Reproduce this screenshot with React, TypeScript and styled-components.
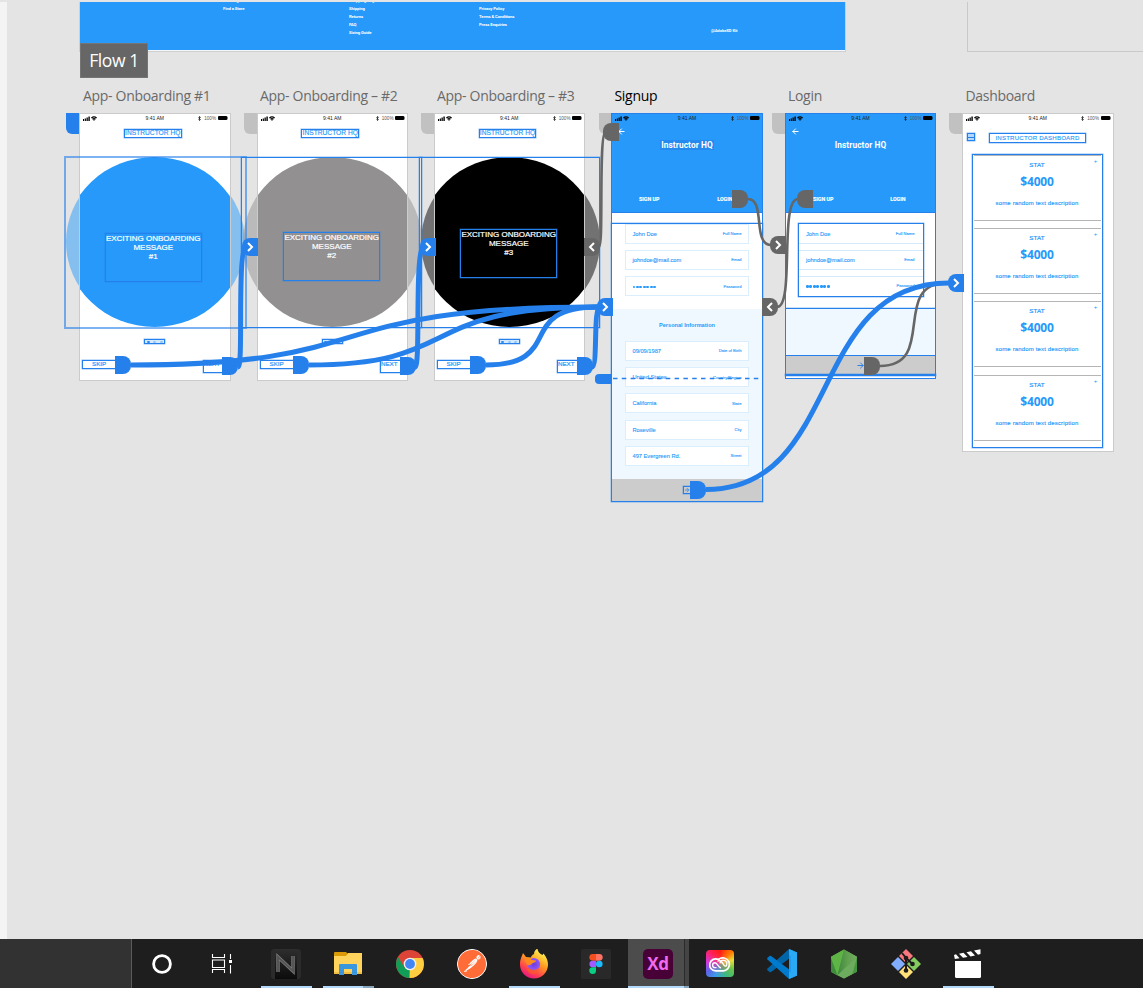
import React from "react";
import styled, { createGlobalStyle } from "styled-components";
import { ArrowLeft, ArrowRight } from "lucide-react";
import { SiPostman } from "react-icons/si";

const BLUE = "#2699fb";
const WIRE = "#2680eb";
const GRAY = "#666666";
const GLOW = "0 0 0 0.5px rgba(38, 128, 235, 0.5)";

const GlobalStyle = createGlobalStyle`
  * { box-sizing: border-box; }
  body { margin: 0; background: #e4e4e4; font-family: "Liberation Sans", Arial, sans-serif; }
`;

const Screen = styled.div`
  width: 1143px;
  height: 988px;
  display: flex;
  flex-direction: column;
  overflow: hidden;
`;

const Canvas = styled.main`
  position: relative;
  flex: 1;
  background: #e4e4e4;
  overflow: hidden;
`;

const SidePanel = styled.div`
  width: 7px;
  height: 937px;
  margin-top: 2px;
  background: #f4f4f4;
`;

type Box = { $x: number; $y: number; $w: number; $h: number };

/* ---------- canvas items ---------- */

const WebFooter = styled.section`
  position: absolute;
  left: 79px;
  top: 2px;
  width: 767px;
  height: 50px;
  padding-left: 143px;
  border: solid #cfcfcf;
  border-width: 0 1px 1px 1px;
  box-shadow: inset 0 -1px #f3f8fd;
  background: ${BLUE};
  display: flex;
  overflow: hidden;
`;

const FooterColumn = styled.div<{ $w: number; $top?: number }>`
  width: ${(p) => p.$w}px;
  flex: none;
  margin-top: ${(p) => p.$top ?? -5}px;
  font: 700 4.2px/8px Roboto, sans-serif;
  letter-spacing: -0.1px;
  color: #fff;
  white-space: nowrap;
`;

const EmptyBoard = styled.section`
  position: absolute;
  left: 967px;
  top: 2px;
  width: 200px;
  height: 50px;
  border: solid #c9c9c9;
  border-width: 0 0 1px 1px;
`;

const FlowTag = styled.div`
  position: absolute;
  left: 80px;
  top: 43px;
  width: 68px;
  height: 35px;
  background: #666;
  box-shadow: inset 0 0 0 1px #757575;
  color: #fff;
  font: 17.5px/35px "Open Sans", sans-serif;
  letter-spacing: -0.4px;
  text-align: center;
  white-space: nowrap;
`;

const BoardLabel = styled.h2<{ $x: number; $active?: boolean }>`
  position: absolute;
  left: ${(p) => p.$x}px;
  top: 86px;
  margin: 0;
  font: 400 14px/20px "Open Sans", sans-serif;
  letter-spacing: -0.31px;
  color: ${(p) => (p.$active ? "#000" : "#6a6a6a")};
  white-space: nowrap;
`;

const HomeTab = styled.div<{ $x: number; $on?: boolean }>`
  position: absolute;
  left: ${(p) => p.$x}px;
  top: 113px;
  width: 13px;
  height: 21px;
  border-radius: 0 0 0 6px;
  background: ${(p) => (p.$on ? WIRE : "#c1c1c1")};
`;

const Artboard = styled.article<{ $x: number; $w?: number; $h: number; $line?: string }>`
  position: absolute;
  left: ${(p) => p.$x}px;
  top: 113px;
  width: ${(p) => p.$w ?? 152}px;
  height: ${(p) => p.$h}px;
  border: 1px solid ${(p) => p.$line ?? "#cbcbcb"};
  background: #fff;
  display: flex;
  flex-direction: column;
  align-items: center;
  overflow: hidden;
`;

const GhostCircle = styled.div<{ $x: number; $color: string }>`
  position: absolute;
  left: ${(p) => p.$x}px;
  top: 157px;
  width: 179px;
  height: 170px;
  border-radius: 50%;
  background: ${(p) => p.$color};
  opacity: 0.5;
`;

const Frame = styled.div<Box & { $soft?: boolean }>`
  position: absolute;
  left: ${(p) => p.$x}px;
  top: ${(p) => p.$y}px;
  width: ${(p) => p.$w}px;
  height: ${(p) => p.$h}px;
  border: ${(p) => (p.$soft ? "2px solid rgba(38,128,235,.6)" : `1px solid ${WIRE}`)};
  box-shadow: ${(p) => (p.$soft ? "none" : GLOW)};
`;

/* ---------- status bar ---------- */

const StatusRow = styled.div`
  align-self: stretch;
  flex: none;
  height: 9px;
  padding: 0 3px;
  display: grid;
  grid-template-columns: 1fr auto 1fr;
  align-items: center;
  font-size: 5px;
  line-height: 9px;
  color: #222;
`;

const Clock = styled.span`
  margin-top: -1px;
`;

const StatusEnd = styled.div`
  display: flex;
  align-items: center;
  justify-content: flex-end;
  gap: 1.5px;
  margin-top: -1px;
`;

const Percent = styled.span`
  margin: 1px 0 0 1.5px;
  font-size: 4.6px;
  color: #555;
`;

const Battery = styled.i`
  width: 9px;
  height: 4px;
  border-radius: 1px;
  background: #000;
  box-shadow: 1px 0 0 -0.5px #000;
`;

const StatusBar = () => (
  <StatusRow>
    <svg width="14" height="5" viewBox="0 0 14 5">
      <path d="M0 3h1v2H0zM1.7 2.4h1.200V5H1.700zM3.500 1.400h1.300V5H3.500zM5.400 .4h1.400V5H5.400z" fill="#000" />
      <path d="M8.400 2Q11 -.3 13.600 2M9.500 3.200Q11 1.900 12.500 3.200" stroke="#000" strokeWidth="1.200" fill="none" />
      <path d="M10 3.600h2L11 5z" fill="#000" />
    </svg>
    <Clock>9:41 AM</Clock>
    <StatusEnd>
      <svg width="3" height="5" viewBox="0 0 3 5">
        <path d="M.4 1.4L2.4 3.4 1.5 4.6V.4L2.4 1.5.4 3.4" stroke="#222" strokeWidth=".8" fill="none" />
      </svg>
      <Percent>100%</Percent>
      <Battery />
    </StatusEnd>
  </StatusRow>
);

/* ---------- onboarding ---------- */

const BrandBox = styled.div<{ $w: number }>`
  flex: none;
  margin: 6px 4px 0 0;
  width: ${(p) => p.$w}px;
  height: 9px;
  border: 1px solid ${WIRE};
  box-shadow: ${GLOW};
  color: ${BLUE};
  font-size: 6.6px;
  line-height: 6.4px;
  letter-spacing: 0.05px;
  text-align: center;
  white-space: nowrap;
  -webkit-text-stroke: 0.15px;
`;

const Hero = styled.div<{ $color: string; $gap: number }>`
  flex: none;
  margin-top: 19px;
  width: 179px;
  height: 170px;
  padding-top: ${(p) => p.$gap}px;
  border-radius: 50%;
  background: ${(p) => p.$color};
  display: flex;
  justify-content: center;
`;

const Message = styled.p<{ $shift: number }>`
  margin: 0 0 0 ${(p) => p.$shift}px;
  width: 97px;
  height: 49px;
  border: 1px solid ${WIRE};
  box-shadow: ${GLOW};
  color: #fff;
  font-size: 8px;
  line-height: 9px;
  text-align: center;
  white-space: nowrap;
  -webkit-text-stroke: 0.2px;
`;

const Pager = styled.div`
  flex: none;
  margin-top: 12px;
  width: 21px;
  height: 5px;
  border: 1px solid ${WIRE};
  box-shadow: ${GLOW};
  display: flex;
  justify-content: space-around;
  align-items: center;
  background: #d5e9fc;
`;

const Dot = styled.i<{ $on?: boolean }>`
  width: 3px;
  height: 2px;
  border-radius: 50%;
  background: ${(p) => (p.$on ? WIRE : "#8ec3f7")};
`;

const Actions = styled.div`
  flex: none;
  align-self: stretch;
  margin-top: 16px;
  padding: 0 1px 0 2px;
  display: flex;
  justify-content: space-between;
  color: ${BLUE};
  font-size: 6.2px;
  line-height: 5px;
  -webkit-text-stroke: 0.2px;
`;

const Skip = styled.span`
  width: 41px;
  height: 9px;
  border: 1px solid ${WIRE};
  box-shadow: ${GLOW};
  padding-left: 9px;
`;

const Next = styled.span`
  width: 26px;
  height: 13px;
  border: 1px solid ${WIRE};
  box-shadow: ${GLOW};
`;

type OnboardingProps = { x: number; n: number; color: string; brandW: number; gap: number; shift: number };

const Onboarding = ({ x, n, color, brandW, gap, shift }: OnboardingProps) => (
  <Artboard $x={x} $w={151.500} $h={268}>
    <StatusBar />
    <BrandBox $w={brandW}>INSTRUCTOR HQ</BrandBox>
    <Hero $color={color} $gap={gap}>
      <Message $shift={shift}>
        EXCITING ONBOARDING
        <br />
        MESSAGE
        <br />#{n}
      </Message>
    </Hero>
    <Pager>
      <Dot $on />
      <Dot />
      <Dot />
    </Pager>
    <Actions>
      <Skip>SKIP</Skip>
      <Next>NEXT</Next>
    </Actions>
  </Artboard>
);

/* ---------- sign up and login ---------- */

const Header = styled.header`
  flex: none;
  align-self: stretch;
  height: 99px;
  background: ${BLUE};
  border-bottom: 1px solid ${WIRE};
  display: flex;
  flex-direction: column;
`;

const BackRow = styled.div`
  height: 16px;
  padding: 4px 0 0 5px;
  color: #fff;
  line-height: 0;
`;

const AppTitle = styled.div<{ $boxed?: boolean }>`
  align-self: center;
  margin-top: 1px;
  height: 10px;
  padding: 0 1px;
  background: ${(p) => (p.$boxed ? "#248af0" : "transparent")};
  color: #fff;
  font: 700 8.3px/10px Roboto, sans-serif;
  letter-spacing: 0.1px;
`;

const TabRow = styled.nav`
  margin-top: 44px;
  padding: 0 29.500px 0 27px;
  display: flex;
  justify-content: space-between;
  color: #fff;
  font: 700 5.3px/10px Roboto, sans-serif;
  -webkit-text-stroke: 0.15px;
`;

const AuthHeader = ({ boxed }: { boxed?: boolean }) => (
  <Header>
    <StatusBar />
    <BackRow>
      <ArrowLeft size={9} strokeWidth={2.6} />
    </BackRow>
    <AppTitle $boxed={boxed}>Instructor HQ</AppTitle>
    <TabRow>
      <span>SIGN UP</span>
      <span>LOGIN</span>
    </TabRow>
  </Header>
);

const Form = styled.div<{ $tint?: boolean; $h: number; $pad: number }>`
  flex: none;
  align-self: stretch;
  height: ${(p) => p.$h}px;
  padding: ${(p) => p.$pad}px 13px 0;
  background: ${(p) => (p.$tint ? "#f0f8ff" : "#fff")};
  display: flex;
  flex-direction: column;
  gap: 6.2px;
  overflow: hidden;
`;

const Field = styled.div`
  flex: none;
  height: 20px;
  padding: 0 6.5px;
  border: 1px solid #dbeefe;
  background: #fff;
  display: flex;
  align-items: center;
  justify-content: space-between;
  color: ${BLUE};
  font-size: 5.7px;
  white-space: nowrap;
  -webkit-text-stroke: 0.12px;
`;

const Hint = styled.small`
  font-size: 4.1px;
`;

const Bullets = styled.span`
  display: flex;
  gap: 0.8px;
  padding-top: 1.5px;

  i {
    width: 2.7px;
    height: 2.7px;
    border-radius: 50%;
    background: ${BLUE};
  }
`;

const Password = () => (
  <Bullets>
    {Array.from({ length: 7 }, (_, i) => (
      <i key={i} />
    ))}
  </Bullets>
);

const SectionTitle = styled.h3`
  margin: 0 0 4.8px;
  color: ${BLUE};
  font: 700 5.6px/9px "Liberation Sans", sans-serif;
  text-align: center;
`;

const Gap = styled.div<{ $h: number }>`
  flex: none;
  height: ${(p) => p.$h}px;
`;

const SubmitBar = styled.div<{ $h: number; $nudge?: number }>`
  flex: none;
  align-self: stretch;
  height: ${(p) => p.$h}px;
  padding-right: ${(p) => p.$nudge ?? 0}px;
  background: #ccc;
  display: flex;
  align-items: center;
  justify-content: center;
  color: ${WIRE};
`;

const SubmitIcon = styled.span`
  width: 8px;
  height: 8px;
  border: 1px solid ${WIRE};
  box-shadow: ${GLOW};
  line-height: 0;
`;

const LoginFields = styled.div`
  flex: none;
  margin: 10px 0 0 1px;
  width: 126px;
  height: 74px;
  border: 1px solid ${WIRE};
  box-shadow: ${GLOW};
  display: flex;
  flex-direction: column;
  gap: 6.2px;
`;

const LoginField = styled.div`
  flex: none;
  height: 20px;
  padding: 0 8.5px 0 7px;
  border: solid #d3e9fc;
  border-width: 1px 0;
  display: flex;
  align-items: center;
  justify-content: space-between;
  color: ${BLUE};
  font-size: 5.7px;
  -webkit-text-stroke: 0.12px;

  &:first-child {
    height: 19.500px;
    border-color: transparent transparent #d3e9fc;
  }

  &:last-child {
    border-color: #d3e9fc transparent transparent;
  }
`;

const TintPanel = styled.div`
  flex: none;
  align-self: stretch;
  margin-top: 11px;
  height: 48px;
  border: solid ${WIRE};
  border-width: 1px 0;
  box-shadow: ${GLOW};
  background: #f0f8ff;
`;

const personal = [
  ["09/09/1987", "Date of Birth"],
  ["United States", "Country/Region"],
  ["California", "State"],
  ["Roseville", "City"],
  ["497 Evergreen Rd.", "Street"],
];

/* ---------- dashboard ---------- */

const DashHeader = styled.div`
  align-self: stretch;
  flex: none;
  height: 31px;
  padding: 10px 0 0 4px;
  display: flex;
  align-items: flex-start;
  gap: 14px;
`;

const MenuIcon = styled.div`
  width: 8px;
  height: 8px;
  border: 1px solid ${WIRE};
  box-shadow: ${GLOW};
  background: linear-gradient(${WIRE}, ${WIRE}) center / 6px 1px no-repeat #b5d8fa;
`;

const DashTitle = styled.div`
  width: 97px;
  height: 10px;
  border: 1px solid ${WIRE};
  box-shadow: ${GLOW};
  color: ${BLUE};
  font-size: 6.1px;
  line-height: 8px;
  letter-spacing: 0.2px;
  text-align: center;
  white-space: nowrap;
  -webkit-text-stroke: 0.12px;
`;

const Stats = styled.div`
  flex: none;
  width: 131px;
  height: 294px;
  border: 1px solid ${WIRE};
  box-shadow: ${GLOW};
  display: flex;
  flex-direction: column;
`;

const StatCard = styled.div<{ $next: number }>`
  flex: none;
  position: relative;
  margin: 0 1px ${(p) => p.$next}px;
  height: 66px;
  padding-right: 1.5px;
  border: solid #b5b5b5;
  border-width: 1px 0;
  display: flex;
  flex-direction: column;
  align-items: center;
  color: ${BLUE};
`;

const StatName = styled.span`
  margin-top: 4px;
  font-size: 6.2px;
  line-height: 10px;
  letter-spacing: 0.2px;
  -webkit-text-stroke: 0.2px;
`;

const StatValue = styled.strong`
  margin-top: 4px;
  font: 700 12px/16px "Open Sans", sans-serif;
  letter-spacing: -0.2px;
`;

const StatText = styled.span`
  margin-top: 8px;
  font-size: 6px;
  line-height: 10px;
  letter-spacing: 0.15px;
  -webkit-text-stroke: 0.15px;
`;

const Plus = styled.span`
  position: absolute;
  right: 4px;
  top: 1px;
  font-size: 6px;
  line-height: 8px;
`;

/* ---------- prototype links ---------- */

const Overlay = styled.svg`
  position: absolute;
  inset: 0;
`;

const Handle = styled.div<{ $x: number; $y: number; $gray?: boolean; $left?: boolean }>`
  position: absolute;
  left: ${(p) => p.$x}px;
  top: ${(p) => p.$y}px;
  width: 16px;
  height: 18px;
  border-radius: ${(p) => (p.$left ? "8px 0 0 8px" : "0 8px 8px 0")};
  background: ${(p) => (p.$gray ? GRAY : WIRE)};
  display: flex;
  align-items: center;
  justify-content: center;
`;

const StickyTab = styled.div`
  position: absolute;
  left: 595px;
  top: 374px;
  width: 17px;
  height: 10px;
  border-radius: 4px 0 0 4px;
  background: ${WIRE};
`;

const Chevron = ({ back }: { back?: boolean }) => (
  <svg width="8" height="10" viewBox="0 0 8 10">
    <path d={back ? "M6 1L2 5l4 4" : "M2 1l4 4-4 4"} fill="none" stroke="#fff" strokeWidth="2" />
  </svg>
);

const blueWires = [
  "M131 365C390 365 310 307 598 307",
  "M309 365C466 365 413 307 598 307",
  "M486 365C566 365 514 307 598 307",
  "M238 367C244 367 236 247 247 247",
  "M415 367C421 367 414 247 424 247",
  "M592 367C598 367 593 307 600 307",
  "M706 489.5C843 489.5 807 283 949 283",
];

const grayWires = [
  "M606 131C598 131 604 247 599 247",
  "M748 199C766 199 752 245 771 245",
  "M798 199C779 199 795 307 777 307",
  "M880 366C938 366 890 283 947 283",
];

/* ---------- taskbar ---------- */

const Taskbar = styled.footer`
  flex: none;
  height: 49px;
  background: #1e1e1e;
  display: flex;
`;

const SearchBox = styled.div`
  flex: none;
  width: 132px;
  background: #323232;
  border-right: 1px solid #5a5a5a;
`;

const TaskButton = styled.div<{ $active?: boolean; $open?: boolean }>`
  flex: none;
  position: relative;
  width: 62px;
  display: flex;
  align-items: center;
  justify-content: center;
  transform: translateX(-1px);

  &::after {
    content: "";
    position: absolute;
    left: ${(p) => (p.$active ? 1 : 6)}px;
    bottom: 0;
    width: ${(p) => (p.$active ? 56 : 51)}px;
    height: 2px;
    background: #b2d9f9;
    display: ${(p) => (p.$open ? "block" : "none")};
  }
`;

const ActiveFill = styled.div`
  position: absolute;
  inset: 0 0 0 1px;
  width: 61px;
  background: linear-gradient(90deg, #4c4c4c 56px, #2c2c2c 56px 57px, #444 57px);
`;

const StackEdge = styled.div<{ $x: number; $w: number }>`
  position: absolute;
  z-index: 1;
  left: ${(p) => p.$x}px;
  bottom: 0;
  width: ${(p) => p.$w}px;
  height: 2px;
  background: #88a5bc;
`;

const Glyph = styled.svg`
  position: relative;
  width: 32px;
  height: 32px;
`;

const XdTile = styled.div`
  position: relative;
  width: 30px;
  height: 30px;
  border-radius: 5px;
  background: #470137;
  color: #f06bf0;
  font: 700 17px/30px "Open Sans", sans-serif;
  text-align: center;
  letter-spacing: -0.3px;
`;

const CloudTile = styled.div`
  width: 28px;
  height: 27px;
  border-radius: 4px;
  background: radial-gradient(circle at 50% 50%, rgba(255, 90, 120, 0.5), transparent 60%),
    conic-gradient(from 0deg, #ff1a12, #ff7a00 45deg, #e8e03a 75deg, #6ac24a 115deg, #3dbb7c 150deg, #3a9ee8 200deg, #5a67e8 235deg, #d23ae0 275deg, #ff1f5a 320deg, #ff1a12);
  display: flex;
  align-items: center;
  justify-content: center;
`;

const PostmanDisc = styled.div`
  width: 30px;
  height: 30px;
  border-radius: 50%;
  border: 1px solid #fff;
  background: #fff;
  color: #ff6c37;
  line-height: 0;
`;

const ring = (
  <Glyph viewBox="0 0 32 32">
    <circle cx="16" cy="16" r="8.4" fill="none" stroke="#fff" strokeWidth="2.8" />
  </Glyph>
);

const taskView = (
  <Glyph viewBox="0 0 32 32">
    <path
      d="M4.500 6v3.500h12V6M4.500 25v-3.500h12V25M4.500 12h12v7.500h-12zM22.500 6v5M22.500 17v8.500"
      fill="none"
      stroke="#fff"
      strokeWidth="1.1"
    />
    <path d="M21 12h3v3h-3z" fill="#fff" />
  </Glyph>
);

const neo = (
  <Glyph viewBox="0 0 32 32">
    <defs>
      <linearGradient id="neoFace" x1="0" y1="0" x2="0" y2="1">
        <stop offset="0" stopColor="#2e2e2e" />
        <stop offset="1" stopColor="#0b0b0b" />
      </linearGradient>
    </defs>
    <path d="M3 1h26l2 2v26l-2 2H3l-2-2V3z" fill="#2b2b2b" />
    <path d="M5 1h22v30H5z" fill="url(#neoFace)" />
    <path d="M8 24V9l15 14V8" fill="none" stroke="#7c7c7c" strokeWidth="3.4" />
    <path d="M8 24V9l15 14V8" fill="none" stroke="#555" strokeWidth="2" />
  </Glyph>
);

const folder = (
  <Glyph viewBox="0 0 32 32">
    <path d="M2 5q0-1 1-1h11l1.500 1.500V9H2z" fill="#dc9a06" />
    <path d="M2 8h12l2-3h14v21H2z" fill="#ffd35c" />
    <path d="M2 24h28v2H2z" fill="#f0bd45" />
    <path d="M7 27V17q0-1 1-1h16q1 0 1 1v10h-5v-6h-8v6z" fill="#3a96dd" />
  </Glyph>
);

const chrome = (
  <Glyph viewBox="0 0 32 32">
    <circle cx="16" cy="16" r="14" fill="#db4437" />
    <path d="M3.9 9A14 14 0 0 0 15.5 30L21 19.5H10.5z" fill="#0f9d58" />
    <path d="M15.5 30A14 14 0 0 0 28.6 10H16v5z" fill="#ffcd40" />
    <circle cx="16" cy="16" r="6.3" fill="#f1f1f1" />
    <circle cx="16" cy="16" r="4.9" fill="#4285f4" />
  </Glyph>
);

const firefox = (
  <Glyph viewBox="0 0 32 32">
    <defs>
      <linearGradient id="fox" x1=".8" y1=".1" x2=".3" y2="1">
        <stop offset="0" stopColor="#fff44f" />
        <stop offset=".4" stopColor="#ff9a20" />
        <stop offset=".75" stopColor="#ff4050" />
        <stop offset="1" stopColor="#e31587" />
      </linearGradient>
      <radialGradient id="globe">
        <stop offset="0" stopColor="#6f3bd8" />
        <stop offset="1" stopColor="#9059ff" />
      </radialGradient>
    </defs>
    <path
      d="M2 16.5C2 11 4 8 5 5l3 4 5 .5c0-1 1-2.500 3-3.500C16 3 18 1 19.500 1c.3 3 2.500 5 5 6l1-1.500C28.500 9 30 13 30 16.500A14 14 0 0 1 2 16.500z"
      fill="url(#fox)"
    />
    <circle cx="15.800" cy="16.200" r="6.300" fill="url(#globe)" />
    <path d="M6 11c3-2 6-1 8 1l4 .5c0 2-3 2-4 3-1 2-4 2-5 1z" fill="#ff8a1e" />
    <path d="M9 18c3 5 10 5 13 0-1 6-4 8-7 8-4 0-7-4-6-8z" fill="#ff5a2a" opacity=".7" />
  </Glyph>
);

const figma = (
  <Glyph viewBox="0 0 32 32">
    <rect x="1" y="1" width="30" height="30" rx="1.500" fill="#292929" />
    <path d="M16 6h-3.300a3.300 3.300 0 0 0 0 6.700H16z" fill="#f24e1e" />
    <path d="M16 6h3.300a3.300 3.300 0 0 1 0 6.700H16z" fill="#ff7262" />
    <path d="M16 12.700h-3.300a3.300 3.300 0 0 0 0 6.600H16z" fill="#a259ff" />
    <circle cx="19.300" cy="16" r="3.300" fill="#1abcfe" />
    <path d="M16 19.300h-3.300a3.350 3.350 0 1 0 3.300 3.400z" fill="#0acf83" />
  </Glyph>
);

const vscode = (
  <Glyph viewBox="0 0 32 32">
    <path d="M23 1L1.500 20.500q-.8 1 0 1.800l2 1.700q.8.500 1.600 0L24 10z" fill="#0065a9" />
    <path d="M23 31L1.500 11.500q-.8-1 0-1.800l2-1.700q.8-.5 1.600 0L24 22z" fill="#007acc" />
    <path d="M23 1l8 3.500v23L23 31z" fill="#1f9cf0" />
    <path d="M31 4.500L23 1v6l2 1v16l-2 1v6l8-3.500z" fill="#2aaaf5" />
  </Glyph>
);

const node = (
  <Glyph viewBox="0 0 32 32">
    <defs>
      <linearGradient id="hex" x1="0" y1="0" x2="1" y2="0">
        <stop offset="0" stopColor="#3f873f" />
        <stop offset=".5" stopColor="#5fa04e" />
        <stop offset="1" stopColor="#76ac64" />
      </linearGradient>
    </defs>
    <path d="M16 1.500l13 7.200v15L16 30.500 3 23.700v-15z" fill="#58a046" />
    <path d="M3 8.700L16 1.500l-6.500 26L3 23.700z" fill="#5fb446" />
    <path d="M16 1.500l13 7.200L9.500 27.200z" fill="url(#hex)" />
    <path d="M29 8.700L9.500 27.200 16 30.500l8-4.200z" fill="#6dab5e" />
    <path d="M3 10l6.500 17.200L3 23.700z" fill="#3f8b3d" />
    <path d="M29 10v13.700l-4 2.100z" fill="#459442" />
  </Glyph>
);

const git = (
  <Glyph viewBox="0 0 32 32">
    <path d="M16 1l7 7-7 7-7-7z" fill="#f8787e" />
    <path d="M8 9l7 7-7 7-7-7z" fill="#82aeff" />
    <path d="M24 9l7 7-7 7-7-7z" fill="#85cc60" />
    <path d="M16 17l7 7-7 7-7-7z" fill="#ffe07a" />
    <path d="M12 5l4 5v12M16 10l6.500 6" stroke="#1c1c1c" strokeWidth="2" fill="none" />
    <circle cx="16" cy="10" r="2.300" fill="#1c1c1c" />
    <circle cx="22.500" cy="16" r="2.300" fill="#1c1c1c" />
    <circle cx="16" cy="22.500" r="2.300" fill="#1c1c1c" />
  </Glyph>
);

const clapper = (
  <Glyph viewBox="0 0 32 32">
    <path d="M3 13h26v15.500q0 1.500-1.500 1.500h-23Q3 30 3 28.500z" fill="#fff" />
    <path
      d="M2 7l2-.7L7.500 10.200l-4.700.8zM7 5.700l4.500-1L15.500 9l-4.500.8zM14.500 4.200l4.500-1L23 7.500l-4.500.9zM22 2.600l6.500-1.300V6l-2.500.8z"
      fill="#fff"
    />
  </Glyph>
);

const creativeCloud = (
  <CloudTile>
    <svg width="22" height="18" viewBox="0 0 22 18">
      <path
        d="M7 15.800a6 6 0 1 1 2.500-11.300A6.500 6.500 0 1 1 14.500 15.800z"
        fill="none"
        stroke="#fff"
        strokeWidth="1.700"
      />
      <path
        d="M12 12.800c-2.500 0-3.500-5-6-5a2.300 2.300 0 0 0 0 4.800h1.500M8.500 6.500c2-1.800 3.500-.5 5 1.500 1 1.500 2.500 4.500 4 2.500 1.500-3-1-5.500-3.500-5.200-2 .2-3 1.700-3 3"
        fill="none"
        stroke="#fff"
        strokeWidth="1.400"
      />
    </svg>
  </CloudTile>
);

const Tasks = () => (
  <Taskbar>
    <SearchBox />
    <TaskButton>{ring}</TaskButton>
    <TaskButton>{taskView}</TaskButton>
    <TaskButton $open>{neo}</TaskButton>
    <TaskButton $open>
      {folder}
      <StackEdge $x={46} $w={11} />
    </TaskButton>
    <TaskButton>{chrome}</TaskButton>
    <TaskButton>
      <PostmanDisc>
        <SiPostman size={28} />
      </PostmanDisc>
    </TaskButton>
    <TaskButton $open>{firefox}</TaskButton>
    <TaskButton>{figma}</TaskButton>
    <TaskButton $open $active>
      <ActiveFill />
      <XdTile>Xd</XdTile>
      <StackEdge $x={57} $w={5} />
    </TaskButton>
    <TaskButton>{creativeCloud}</TaskButton>
    <TaskButton>{vscode}</TaskButton>
    <TaskButton>{node}</TaskButton>
    <TaskButton>{git}</TaskButton>
    <TaskButton $open>{clapper}</TaskButton>
  </Taskbar>
);

export default function App() {
  return (
    <Screen>
      <GlobalStyle />
      <Canvas>
        <SidePanel />

        <WebFooter>
          <FooterColumn $w={126}>
            Our Blog
            <br />
            Find a Store
          </FooterColumn>
          <FooterColumn $w={130}>
            Shopping Bag
            <br />
            Shipping
            <br />
            Returns
            <br />
            FAQ
            <br />
            Sizing Guide
          </FooterColumn>
          <FooterColumn $w={232} $top={3}>
            Privacy Policy
            <br />
            Terms &amp; Conditions
            <br />
            Press Enquiries
          </FooterColumn>
          <FooterColumn $w={60} $top={25}>
            @AdobeXD Kit
          </FooterColumn>
        </WebFooter>
        <EmptyBoard />

        <FlowTag>Flow 1</FlowTag>
        <BoardLabel $x={83}>App- Onboarding #1</BoardLabel>
        <BoardLabel $x={260}>App- Onboarding – #2</BoardLabel>
        <BoardLabel $x={437}>App- Onboarding – #3</BoardLabel>
        <BoardLabel $x={614.5} $active>
          Signup
        </BoardLabel>
        <BoardLabel $x={788}>Login</BoardLabel>
        <BoardLabel $x={965.5}>Dashboard</BoardLabel>

        <HomeTab $x={66} $on />
        <HomeTab $x={244} />
        <HomeTab $x={421} />
        <HomeTab $x={599} />
        <HomeTab $x={772} />
        <HomeTab $x={949} />

        <GhostCircle $x={65.5} $color={BLUE} />
        <GhostCircle $x={242.5} $color="#929091" />
        <GhostCircle $x={420.5} $color="#000" />

        <Onboarding x={79} n={1} color={BLUE} brandW={58} gap={76} shift={-3} />
        <Onboarding x={256.5} n={2} color="#929091" brandW={58} gap={75} shift={-1} />
        <Onboarding x={433.5} n={3} color="#000" brandW={57} gap={72} shift={-1} />

        <Artboard $x={611} $h={389} $line={WIRE}>
          <AuthHeader boxed />
          <Gap $h={10} />
          <Form $h={86} $pad={0.8}>
            <Field>
              John Doe<Hint>Full Name</Hint>
            </Field>
            <Field>
              johndoe@mail.com<Hint>Email</Hint>
            </Field>
            <Field>
              <Password />
              <Hint>Password</Hint>
            </Field>
          </Form>
          <Form $tint $h={170} $pad={12}>
            <SectionTitle>Personal Information</SectionTitle>
            {personal.map(([value, hint]) => (
              <Field key={hint}>
                {value}
                <Hint>{hint}</Hint>
              </Field>
            ))}
          </Form>
          <SubmitBar $h={22}>
            <SubmitIcon>
              <ArrowRight size={6} strokeWidth={3} />
            </SubmitIcon>
          </SubmitBar>
        </Artboard>

        <Artboard $x={785} $w={151} $h={266} $line={WIRE}>
          <AuthHeader />
          <LoginFields>
            <LoginField>
              John Doe<Hint>Full Name</Hint>
            </LoginField>
            <LoginField>
              johndoe@mail.com<Hint>Email</Hint>
            </LoginField>
            <LoginField>
              <Password />
              <Hint>Password</Hint>
            </LoginField>
          </LoginFields>
          <TintPanel />
          <SubmitBar $h={18} $nudge={1}>
            <ArrowRight size={9} strokeWidth={2.6} />
          </SubmitBar>
        </Artboard>

        <Artboard $x={962} $w={151.5} $h={339}>
          <StatusBar />
          <DashHeader>
            <MenuIcon />
            <DashTitle>INSTRUCTOR DASHBOARD</DashTitle>
          </DashHeader>
          <Stats>
            {[7, 7, 8, 0].map((next, i) => (
              <StatCard key={i} $next={next}>
                <Plus>+</Plus>
                <StatName>STAT</StatName>
                <StatValue>$4000</StatValue>
                <StatText>some random text description</StatText>
              </StatCard>
            ))}
          </Stats>
        </Artboard>

        <Frame $x={64} $y={156} $w={183} $h={173} $soft />
        <Frame $x={241} $y={157} $w={181} $h={171} />
        <Frame $x={419} $y={157} $w={181} $h={171} />
        <Frame $x={611} $y={223} $w={152} $h={279} />
        <Frame $x={785} $y={374} $w={151} $h={2} />

        <Overlay width="1143" height="939" fill="none">
          <path d="M613 378.500H762" stroke={WIRE} strokeWidth="1.300" strokeDasharray="4.500 4.300" />
          {grayWires.map((d) => (
            <path key={d} d={d} stroke={GRAY} strokeWidth="2.600" />
          ))}
          {blueWires.map((d) => (
            <path key={d} d={d} stroke={WIRE} strokeWidth="5" />
          ))}
        </Overlay>

        <Handle $x={115} $y={356} />
        <Handle $x={293} $y={356} />
        <Handle $x={470} $y={356} />
        <Handle $x={222} $y={357} />
        <Handle $x={400} $y={357} />
        <Handle $x={577} $y={357} />
        <Handle $x={690} $y={481} />
        <Handle $x={603} $y={123} $gray $left />
        <Handle $x={732} $y={190} $gray />
        <Handle $x={797} $y={190} $gray $left />
        <Handle $x={864} $y={357} $gray />
        <Handle $x={242} $y={238} $left>
          <Chevron />
        </Handle>
        <Handle $x={419.5} $y={238} $left>
          <Chevron />
        </Handle>
        <Handle $x={597} $y={298} $left>
          <Chevron />
        </Handle>
        <Handle $x={947.5} $y={273.5} $left>
          <Chevron />
        </Handle>
        <Handle $x={770} $y={236} $gray $left>
          <Chevron />
        </Handle>
        <Handle $x={584} $y={238} $gray>
          <Chevron back />
        </Handle>
        <Handle $x={762} $y={298} $gray>
          <Chevron back />
        </Handle>
        <StickyTab />
      </Canvas>
      <Tasks />
    </Screen>
  );
}
